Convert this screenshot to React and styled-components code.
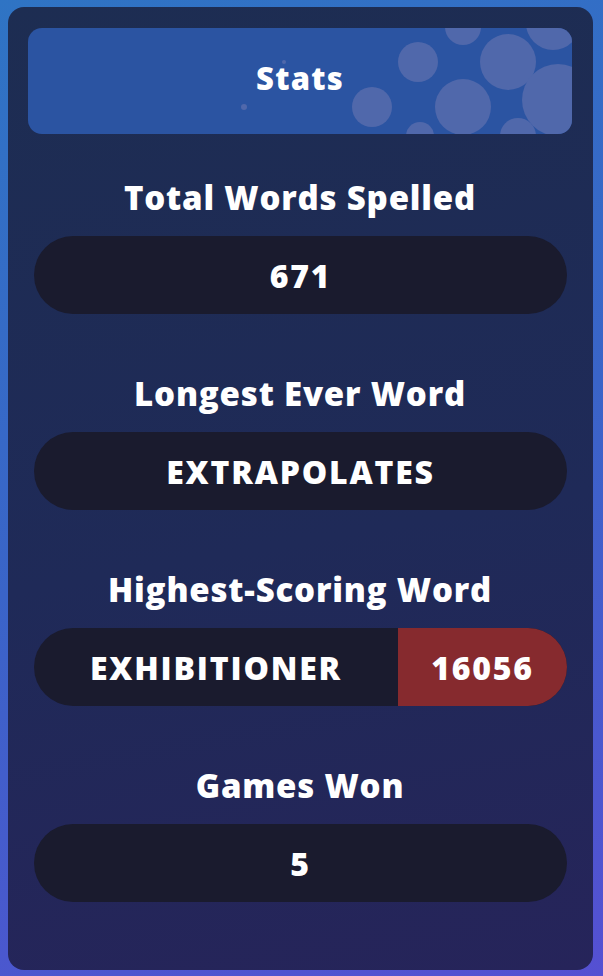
import React from 'react';
import styled, { createGlobalStyle } from 'styled-components';

const GlobalStyle = createGlobalStyle`
  html, body {
    margin: 0;
    padding: 0;
  }
  body {
    width: 603px;
    height: 976px;
    overflow: hidden;
    background: linear-gradient(160deg, #2f74c4 0%, #3a64c8 50%, #5550d2 100%);
    font-family: 'Open Sans', Lato, sans-serif;
  }
`;

const SPanel = styled.div`
  box-sizing: border-box;
  width: 585px;
  height: 963px;
  margin: 7px 0 0 8px;
  padding: 21px 21px 0 20px;
  border-radius: 16px;
  background: linear-gradient(170deg, #1d2d52 0%, #1f2a58 55%, #26245a 100%);
  display: flex;
  flex-direction: column;
`;

const SHeader = styled.div`
  position: relative;
  height: 106px;
  border-radius: 14px;
  background-color: #2b54a2;
  overflow: hidden;
  display: flex;
  align-items: center;
  justify-content: center;
  margin-bottom: 44px;
`;

const SBubbles = styled.svg`
  position: absolute;
  left: 0;
  top: 0;
  width: 544px;
  height: 106px;
`;

const STitle = styled.h1`
  position: relative;
  margin: -6px 0 0;
  color: #ffffff;
  font-size: 31px;
  line-height: 40px;
  font-weight: 800;
  letter-spacing: 1.2px;
`;

const SSection = styled.div`
  display: flex;
  flex-direction: column;
  align-items: center;
  margin-bottom: 60px;
`;

const SLabel = styled.div`
  height: 40px;
  line-height: 40px;
  color: #ffffff;
  font-size: 33px;
  font-weight: 800;
  letter-spacing: 0.8px;
  margin-bottom: 18px;
`;

const SPill = styled.div`
  align-self: stretch;
  margin: 0 5px 0 6px;
  height: 78px;
  border-radius: 39px;
  background-color: #1a1b2e;
  overflow: hidden;
  display: flex;
`;

const SCell = styled.div`
  flex: ${(p) => (p.score ? '0 0 169px' : '1')};
  background-color: ${(p) => (p.score ? '#862a2e' : 'transparent')};
  display: flex;
  align-items: center;
  justify-content: center;
  color: #ffffff;
  font-size: 32px;
  font-weight: 800;
  letter-spacing: 1.8px;
`;

// header bubbles, coordinates inside the 544x106 header
const bubbles = [
  [390, 34, 20],
  [344, 79, 20],
  [480, 34, 28],
  [435, 79, 28],
  [435, -1, 18],
  [525, -5, 27],
  [530, 72, 36],
  [392, 108, 14],
  [490, 108, 18],
  [256, 34, 2],
  [216, 79, 3],
];

function Section({ label, value, score }) {
  return (
    <SSection>
      <SLabel>{label}</SLabel>
      <SPill>
        <SCell>{value}</SCell>
        {score && <SCell score>{score}</SCell>}
      </SPill>
    </SSection>
  );
}

export default function App() {
  return (
    <>
      <GlobalStyle />
      <SPanel>
        <SHeader>
          <SBubbles viewBox="0 0 544 106">
            {bubbles.map(([cx, cy, r]) => (
              <circle key={cx + '-' + cy} cx={cx} cy={cy} r={r} fill="#5068ab" />
            ))}
          </SBubbles>
          <STitle>Stats</STitle>
        </SHeader>
        <Section label="Total Words Spelled" value="671" />
        <Section label="Longest Ever Word" value="EXTRAPOLATES" />
        <Section label="Highest-Scoring Word" value="EXHIBITIONER" score="16056" />
        <Section label="Games Won" value="5" />
      </SPanel>
    </>
  );
}
